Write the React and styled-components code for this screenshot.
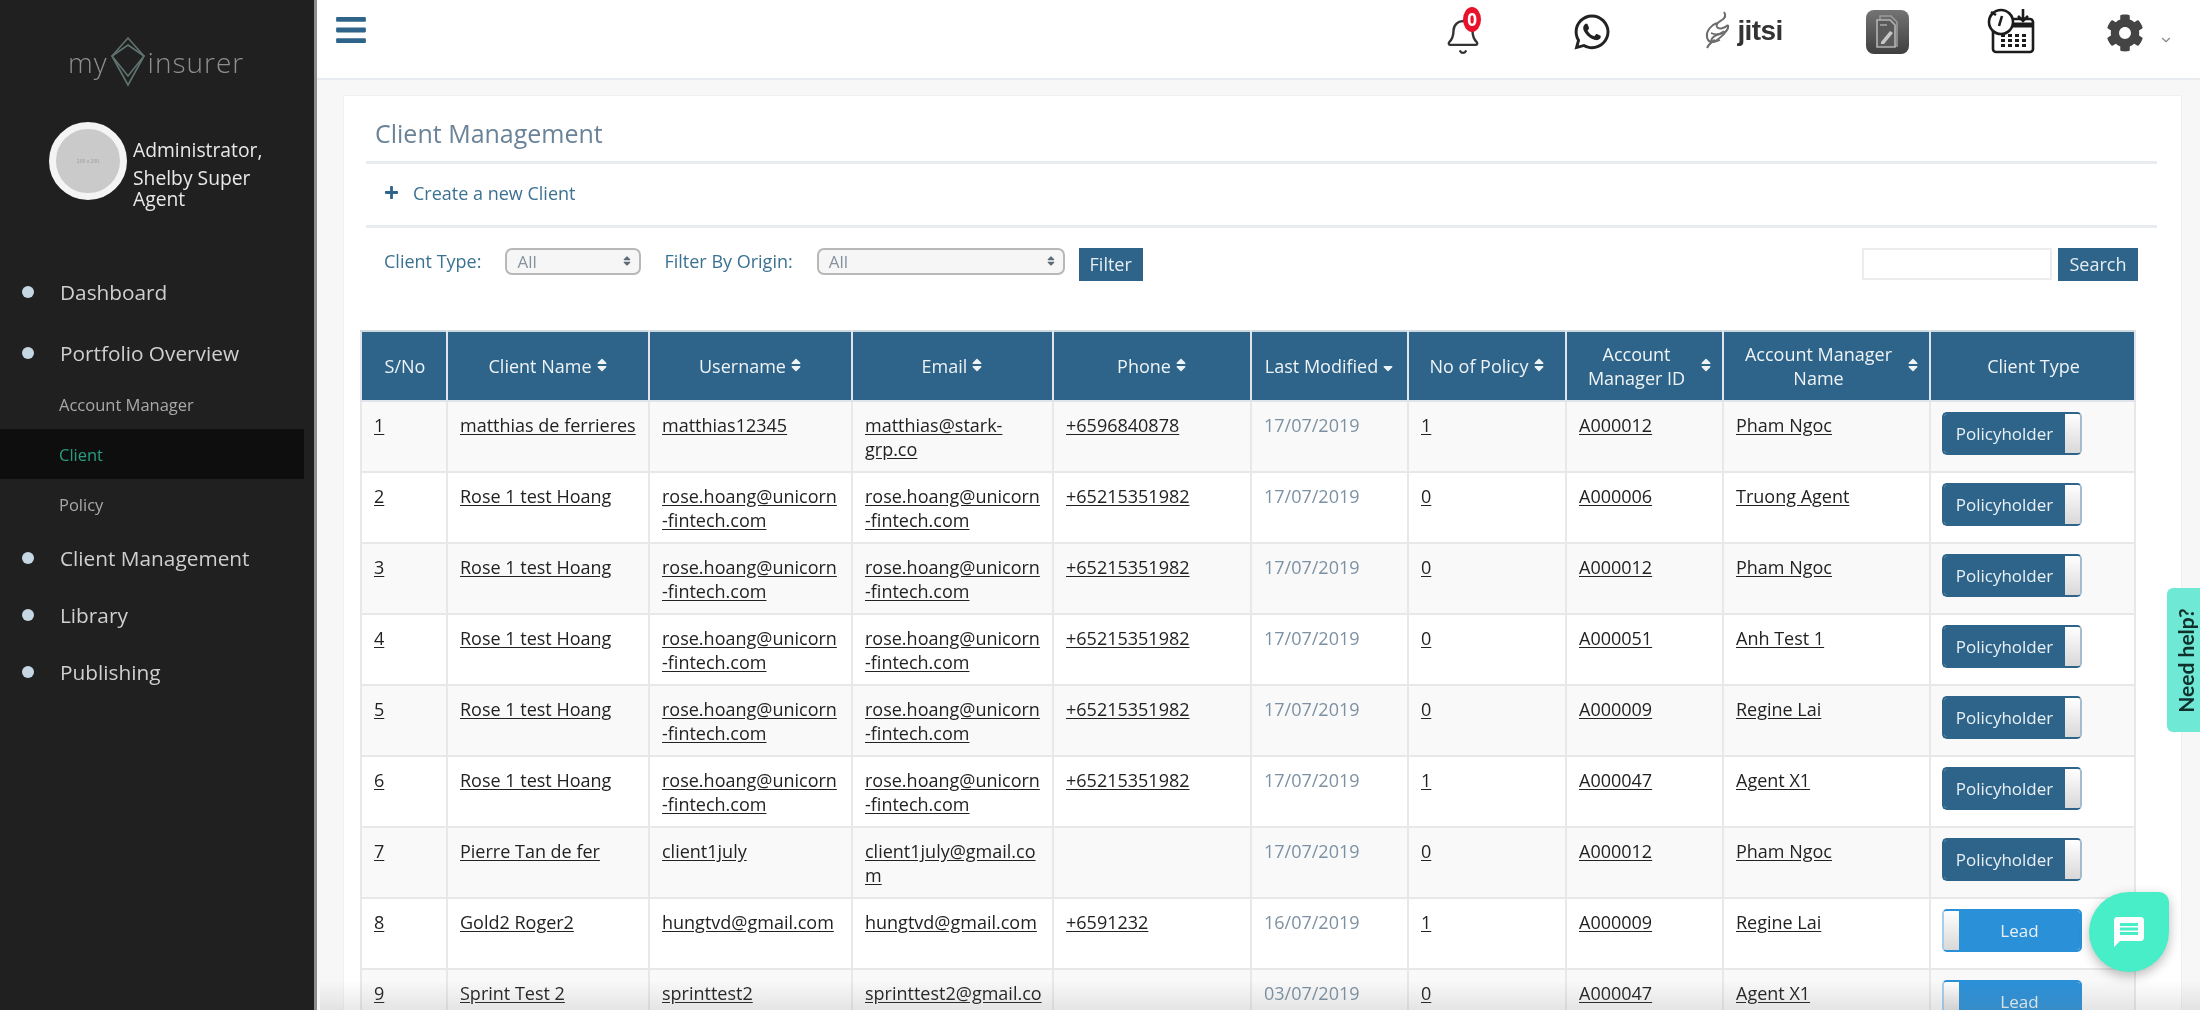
import React from "react";
import styled, { createGlobalStyle } from "styled-components";
import { FaBars, FaCog, FaPlus, FaSort, FaSortDown, FaWhatsapp } from "react-icons/fa";
import { MdMessage } from "react-icons/md";
import { Bell, ChevronDown } from "lucide-react";

const Global = createGlobalStyle`
  html, body { margin: 0; padding: 0; background: #fff; }
  * { box-sizing: border-box; }
  body { font-family: "Open Sans", "Liberation Sans", sans-serif; }
`;

const Shell = styled.div`
  position: relative;
  display: flex;
  width: 2200px;
  height: 1010px;
  overflow: hidden;
  background: #f7f7f7;
  filter: blur(0.6px);
`;

const Sidebar = styled.aside`
  flex: 0 0 317px;
  background: #202020;
  border-right: 3px solid #8d8d8d;
  color: #ddd;
`;

const Logo = styled.div`
  display: flex;
  align-items: center;
  height: 48px;
  margin: 38px 0 0 68px;
  color: #8f8f8f;
  font-size: 28px;
  font-weight: 300;
  letter-spacing: 1px;
  gap: 2px;
`;

const Profile = styled.div`
  display: flex;
  align-items: flex-start;
  gap: 6px;
  margin: 36px 0 0 49px;
`;

const Avatar = styled.div`
  flex: 0 0 78px;
  height: 78px;
  border-radius: 50%;
  border: 7px solid #f4f4f4;
  background: #cacaca;
  color: #999;
  font-size: 5px;
  display: flex;
  align-items: center;
  justify-content: center;
`;

const ProfileText = styled.div`
  width: 150px;
  margin-top: 17px;
  font-size: 19.3px;
  line-height: 21px;
  color: #e8e8e8;
  p { margin: 0 0 7px; }
`;

const Nav = styled.nav`
  margin-top: 68px;
`;

const NavItem = styled.div`
  position: relative;
  display: flex;
  align-items: center;
  gap: 26px;
  height: 30px;
  margin: ${(p) => p.$mt}px 0 0 22px;
  font-size: 20.8px;
  color: #cfcfcf;
`;

const Dot = styled.span`
  flex: 0 0 12px;
  height: 12px;
  border-radius: 50%;
  background: #c6d7e4;
`;

const SubItem = styled.div`
  display: flex;
  align-items: center;
  width: 304px;
  height: 50px;
  padding-left: 59px;
  font-size: 16.5px;
  background: ${(p) => (p.$active ? "#0e0e0e" : "transparent")};
  color: ${(p) => (p.$active ? "#2a9d80" : "#a8a8a8")};
`;

const SubList = styled.div`
  margin-top: 11px;
`;

const Main = styled.main`
  flex: 1;
  min-width: 0;
  display: flex;
  flex-direction: column;
`;

const Topbar = styled.header`
  flex: 0 0 80px;
  display: flex;
  align-items: flex-start;
  background: #fff;
  border-bottom: 2px solid #e8ebf0;
  padding-left: 17px;
`;

const Burger = styled.div`
  color: #2e6489;
  height: 60px;
  display: flex;
  align-items: center;
  font-size: 34px;
  margin-right: auto;
`;

const TopIcons = styled.div`
  display: flex;
  align-items: flex-start;
`;

const IconSlot = styled.div`
  position: relative;
  width: ${(p) => p.$w}px;
  height: 62px;
  margin-left: ${(p) => p.$ml}px;
  padding-top: ${(p) => p.$pt}px;
  display: flex;
  justify-content: center;
  color: ${(p) => p.$c || "#222"};
`;

const Badge = styled.span`
  position: absolute;
  top: 7px;
  left: 20px;
  width: 18px;
  height: 25px;
  border-radius: 50%;
  background: #e8132a;
  color: #fff;
  font-size: 17px;
  font-weight: 700;
  display: flex;
  align-items: center;
  justify-content: center;
`;

const JitsiWord = styled.span`
  font-family: "Liberation Sans", sans-serif;
  font-weight: 700;
  font-size: 28px;
  letter-spacing: -0.6px;
  line-height: 36px;
  color: #333;
  margin-left: 4px;
  margin-top: 2px;
`;

const Content = styled.div`
  flex: 1;
  min-height: 0;
  padding: 15px 18px 0 26px;
`;

const Card = styled.section`
  height: 100%;
  background: #fff;
  padding: 0 24px 0 17px;
  border: 1px solid #f0f0f0;
  border-bottom: 0;
`;

const CardTitle = styled.h1`
  margin: 0 0 0 14px;
  height: 65px;
  line-height: 74px;
  font-size: 25px;
  font-weight: 400;
  color: #6a8398;
`;

const Rule = styled.hr`
  margin: 0 0 0 5px;
  border: 0;
  height: 3px;
  background: #e8ebf0;
`;

const CreateRow = styled.div`
  display: flex;
  align-items: center;
  height: 61px;
  padding: 0 0 4px 23px;
  gap: 14px;
  font-size: 18px;
  color: #3b7191;
`;

const FilterRow = styled.div`
  display: flex;
  align-items: center;
  height: 68px;
  padding: 4px 19px 0 23px;
  margin-bottom: 34px;
  color: #3b7191;
  font-size: 18px;
`;

const FilterLabel = styled.span`
  margin-top: -6px;
  margin-right: ${(p) => p.$mr}px;
  white-space: nowrap;
`;

const SelectBox = styled.div`
  display: flex;
  align-items: center;
  justify-content: space-between;
  width: ${(p) => p.$w}px;
  height: 27px;
  margin-top: -6px;
  margin-right: ${(p) => p.$mr}px;
  padding: 0 6px 0 10px;
  border: 2px solid #b8b8b8;
  border-radius: 7px;
  background: #f6f6f6;
  color: #84939f;
  font-size: 17px;
`;

const SelectArrows = styled.span`
  display: flex;
  color: #5b6c78;
  font-size: 12px;
`;

const ActionButton = styled.button`
  width: ${(p) => p.$w}px;
  height: 33px;
  margin: 0;
  padding: 0;
  border: 0;
  background: #2e6489;
  color: #e6eef3;
  font: 400 18px "Open Sans", sans-serif;
`;

const SearchBox = styled.div`
  width: 190px;
  height: 32px;
  margin-left: auto;
  margin-right: 6px;
  background: #fff;
  border: 2px solid #ececec;
`;

const Table = styled.table`
  width: 1774px;
  margin-left: -1px;
  table-layout: fixed;
  border-collapse: collapse;
  font-size: 18px;
`;

const Th = styled.th`
  height: 70px;
  padding: 0 8px;
  background: #2e6489;
  border: 2px solid #dfe5ea;
  border-top-color: #cfd8df;
  color: #eef3f6;
  font-weight: 400;
  line-height: 24px;
`;

const ThInner = styled.div`
  display: flex;
  align-items: center;
  justify-content: center;
  gap: 2px;
  padding-left: 2px;
  text-align: center;
  svg { flex: none; margin-top: -3px; }
`;

const ThLabel = styled.span`
  flex: ${(p) => (p.$spread ? 1 : "none")};
  white-space: pre-line;
`;

const Row = styled.tr`
  height: 71px;
  background: ${(p) => (p.$odd ? "#f9f9f9" : "#fff")};
`;

const Td = styled.td`
  padding: 11px 12px 0;
  vertical-align: top;
  border: 2px solid #e8e8e8;
  line-height: 24px;
  color: #222;
  white-space: pre;
  overflow: hidden;
`;

const CellLink = styled.span`
  text-decoration: underline;
  text-underline-offset: 2px;
`;

const DateText = styled.span`
  color: #7c91a3;
`;

const Toggle = styled.div`
  display: flex;
  flex-direction: ${(p) => (p.$lead ? "row-reverse" : "row")};
  width: 140px;
  height: 43px;
  margin: -1px 0 0 -1px;
  border-radius: 5px;
  overflow: hidden;
  border: 2px solid ${(p) => (p.$lead ? "#2a90d8" : "#2e6489")};
  ${(p) => (p.$lead ? "border-left-color: #a8cdea;" : "border-right-color: #a3bccd;")}
  color: #e8f0f5;
  font-size: 17px;
`;

const ToggleLabel = styled.div`
  flex: 1;
  display: flex;
  align-items: center;
  justify-content: center;
  background: ${(p) => (p.$lead ? "#2a90d8" : "#2e6489")};
`;

const ToggleKnob = styled.div`
  flex: 0 0 15px;
  background: linear-gradient(#fff, #d8d8d8);
`;

const BottomFade = styled.div`
  position: absolute;
  left: 320px;
  right: 0;
  bottom: 0;
  height: 30px;
  background: linear-gradient(rgba(120,120,120,0), rgba(120,120,120,.16));
  pointer-events: none;
`;

const HelpTab = styled.div`
  position: absolute;
  left: 2167px;
  top: 588px;
  width: 33px;
  height: 144px;
  padding-left: 3px;
  background: #6fe9d6;
  border-radius: 6px 0 0 6px;
  display: flex;
  align-items: center;
  justify-content: center;
`;

const HelpText = styled.span`
  transform: rotate(-90deg);
  white-space: nowrap;
  font-family: "Lato", sans-serif;
  font-size: 21px;
  font-weight: 700;
  color: #10302c;
`;

const ChatBubble = styled.div`
  position: absolute;
  left: 2089px;
  top: 892px;
  width: 80px;
  height: 80px;
  border-radius: 50% 10px 50% 50%;
  background: #48eec8;
  box-shadow: 0 4px 12px rgba(0, 0, 0, .28);
  color: #fff;
  display: flex;
  align-items: center;
  justify-content: center;
  font-size: 36px;
`;

const Diamond = () => (
  <svg width="36" height="50" viewBox="0 0 36 50" fill="none" stroke="#5f7370" strokeWidth="1.6">
    <path d="M18 1 L34 19 L18 48 L2 19 Z" />
    <path d="M18 8 L34 19 L18 39 L2 19 Z" />
  </svg>
);

const JitsiMark = () => (
  <svg width="28" height="39" viewBox="0 0 28 39" fill="none" stroke="#6d6d6d" strokeWidth="2">
    <path d="M19 1c2 3 1 6-2 8s-7 4-5 7 8 1 11-2" />
    <path d="M23 14c1 5-3 8-8 9s-8 3-9 7" />
    <path d="M12 12C6 14 1 20 2 26s6 6 10 3 8-6 9-9" />
    <path d="M6 22c4 2 9 1 13-2" strokeWidth="1.4" />
    <path d="M2 37c2-4 4-6 8-8" />
    <path d="M8 31c3 0 5-1 7-2" strokeWidth="1.4" />
  </svg>
);

const TabletIcon = () => (
  <svg width="43" height="44" viewBox="0 0 43 44">
    <defs>
      <linearGradient id="tabletBg" x1="0" y1="0" x2="0" y2="1">
        <stop offset="0" stopColor="#747474" />
        <stop offset="1" stopColor="#3f3f3f" />
      </linearGradient>
    </defs>
    <rect width="43" height="44" rx="8" fill="url(#tabletBg)" />
    <path d="M14 6h11l6 6v24H14z" fill="none" stroke="#9a9a9a" strokeWidth="1.6" />
    <path d="M11 10h13l5 5v22H11z" fill="#5a5a5a" stroke="#b3b3b3" strokeWidth="1.6" />
    <path d="M15 32l9-11 3 2-9 11h-3z" fill="#c6c6c6" />
    <path d="M14 15h7" stroke="#a5a5a5" strokeWidth="1.6" />
  </svg>
);

const CalendarIcon = () => (
  <svg width="48" height="46" viewBox="0 0 48 46" fill="none" stroke="#1c1c1c" strokeWidth="2.6">
    <rect x="6" y="11" width="40" height="33" rx="3" />
    <path d="M6 17h40" strokeWidth="5" />
    <circle cx="14" cy="14" r="12" fill="#fff" />
    <path d="M15 8l-3 10" />
    <path d="M4 4l5 3" />
    <path d="M36 1v11M31 8l5 5 5-5" />
    <g fill="#1c1c1c" stroke="none">
      {[14, 21, 28, 35].flatMap((x) =>
        [26, 31, 36].map((y) => <rect key={`${x}-${y}`} x={x} y={y} width="4" height="3" />)
      )}
    </g>
  </svg>
);

const headers = [
  ["S/No", 86, null],
  ["Client Name", 202, "sort"],
  ["Username", 203, "sort"],
  ["Email", 201, "sort"],
  ["Phone", 198, "sort"],
  ["Last Modified", 157, "down"],
  ["No of Policy", 158, "sort"],
  ["Account\nManager ID", 157, "sort"],
  ["Account Manager\nName", 207, "sort"],
  ["Client Type", 205, null],
];

const roseMail = "rose.hoang@unicorn\n-fintech.com";
const rows = [
  ["1", "matthias de ferrieres", "matthias12345", "matthias@stark-\ngrp.co", "+6596840878", "17/07/2019", "1", "A000012", "Pham Ngoc", "Policyholder"],
  ["2", "Rose 1 test Hoang", roseMail, roseMail, "+65215351982", "17/07/2019", "0", "A000006", "Truong Agent", "Policyholder"],
  ["3", "Rose 1 test Hoang", roseMail, roseMail, "+65215351982", "17/07/2019", "0", "A000012", "Pham Ngoc", "Policyholder"],
  ["4", "Rose 1 test Hoang", roseMail, roseMail, "+65215351982", "17/07/2019", "0", "A000051", "Anh Test 1", "Policyholder"],
  ["5", "Rose 1 test Hoang", roseMail, roseMail, "+65215351982", "17/07/2019", "0", "A000009", "Regine Lai", "Policyholder"],
  ["6", "Rose 1 test Hoang", roseMail, roseMail, "+65215351982", "17/07/2019", "1", "A000047", "Agent X1", "Policyholder"],
  ["7", "Pierre Tan de fer", "client1july", "client1july@gmail.co\nm", "", "17/07/2019", "0", "A000012", "Pham Ngoc", "Policyholder"],
  ["8", "Gold2 Roger2", "hungtvd@gmail.com", "hungtvd@gmail.com", "+6591232", "16/07/2019", "1", "A000009", "Regine Lai", "Lead"],
  ["9", "Sprint Test 2", "sprinttest2", "sprinttest2@gmail.co\nm", "", "03/07/2019", "0", "A000047", "Agent X1", "Lead"],
];

const ClientRow = ({ row, odd }) => {
  const type = row[9];
  const lead = type === "Lead";
  return (
    <Row $odd={odd}>
      {row.slice(0, 9).map((value, i) => (
        <Td key={i}>
          {i === 5 ? <DateText>{value}</DateText> : <CellLink>{value}</CellLink>}
        </Td>
      ))}
      <Td>
        <Toggle $lead={lead}>
          <ToggleLabel $lead={lead}>{type}</ToggleLabel>
          <ToggleKnob />
        </Toggle>
      </Td>
    </Row>
  );
};

export default function App() {
  return (
    <Shell>
      <Global />
      <Sidebar>
        <Logo>
          <span>my</span>
          <Diamond />
          <span>insurer</span>
        </Logo>
        <Profile>
          <Avatar>200 x 200</Avatar>
          <ProfileText>
            <p>Administrator,</p>
            Shelby Super Agent
          </ProfileText>
        </Profile>
        <Nav>
          <NavItem $mt={0}><Dot />Dashboard</NavItem>
          <NavItem $mt={31}><Dot />Portfolio Overview</NavItem>
          <SubList>
            <SubItem>Account Manager</SubItem>
            <SubItem $active>Client</SubItem>
            <SubItem>Policy</SubItem>
          </SubList>
          <NavItem $mt={14}><Dot />Client Management</NavItem>
          <NavItem $mt={27}><Dot />Library</NavItem>
          <NavItem $mt={27}><Dot />Publishing</NavItem>
        </Nav>
      </Sidebar>
      <Main>
        <Topbar>
          <Burger><FaBars /></Burger>
          <TopIcons>
            <IconSlot $w={40} $ml={0} $pt={18} $c="#333">
              <Bell size={38} strokeWidth={1.5} />
              <Badge>0</Badge>
            </IconSlot>
            <IconSlot $w={40} $ml={89} $pt={12}>
              <FaWhatsapp size={40} />
            </IconSlot>
            <IconSlot $w={80} $ml={92} $pt={11} $c="#555">
              <JitsiMark />
              <JitsiWord>jitsi</JitsiWord>
            </IconSlot>
            <IconSlot $w={43} $ml={82} $pt={10}>
              <TabletIcon />
            </IconSlot>
            <IconSlot $w={48} $ml={78} $pt={8}>
              <CalendarIcon />
            </IconSlot>
            <IconSlot $w={40} $ml={70} $pt={14} $c="#444">
              <FaCog size={38} />
            </IconSlot>
            <IconSlot $w={16} $ml={13} $pt={33} $c="#888">
              <ChevronDown size={14} />
            </IconSlot>
            <IconSlot $w={26} $ml={0} $pt={0} />
          </TopIcons>
        </Topbar>
        <Content>
          <Card>
            <CardTitle>Client Management</CardTitle>
            <Rule />
            <CreateRow>
              <FaPlus size={15} color="#2e6489" />
              Create a new Client
            </CreateRow>
            <Rule />
            <FilterRow>
              <FilterLabel $mr={24}>Client Type:</FilterLabel>
              <SelectBox $w={136} $mr={23}>
                All
                <SelectArrows><FaSort /></SelectArrows>
              </SelectBox>
              <FilterLabel $mr={24}>Filter By Origin:</FilterLabel>
              <SelectBox $w={248} $mr={14}>
                All
                <SelectArrows><FaSort /></SelectArrows>
              </SelectBox>
              <ActionButton $w={64}>Filter</ActionButton>
              <SearchBox />
              <ActionButton $w={80}>Search</ActionButton>
            </FilterRow>
            <Table>
              <colgroup>
                {headers.map(([label, w]) => <col key={label} width={w} />)}
              </colgroup>
              <thead>
                <tr>
                  {headers.map(([label, , sort]) => (
                    <Th key={label}>
                      <ThInner>
                        <ThLabel $spread={label.includes("\n")}>{label}</ThLabel>
                        {sort === "sort" && <FaSort size={16} />}
                        {sort === "down" && <FaSortDown size={16} />}
                      </ThInner>
                    </Th>
                  ))}
                </tr>
              </thead>
              <tbody>
                {rows.map((row, i) => <ClientRow key={row[0]} row={row} odd={i % 2 === 0} />)}
              </tbody>
            </Table>
          </Card>
        </Content>
      </Main>
      <BottomFade />
      <HelpTab><HelpText>Need help?</HelpText></HelpTab>
      <ChatBubble><MdMessage /></ChatBubble>
    </Shell>
  );
}
